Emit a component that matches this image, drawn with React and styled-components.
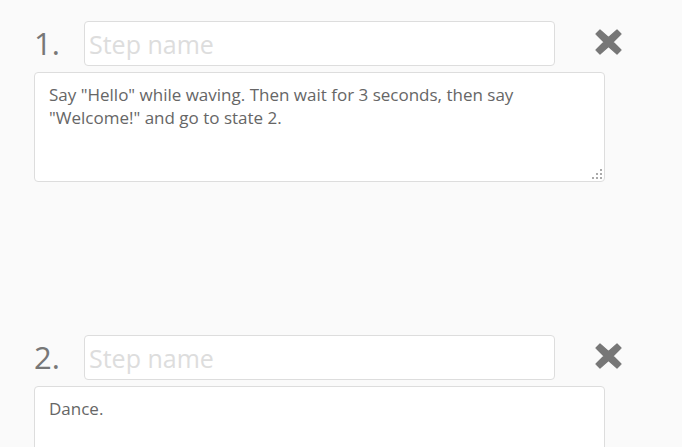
import React from "react"
import styled, { createGlobalStyle } from "styled-components"

const GlobalStyle = createGlobalStyle`
  html, body {
    margin: 0;
    padding: 0;
    background-color: #fafafa;
    font-family: "Open Sans", "Liberation Sans", sans-serif;
  }
  * {
    box-sizing: border-box;
  }
`

const StepList = styled.div`
  display: flex;
  flex-direction: column;
  padding: 21px 0 0 34px;
`

const Step = styled.section`
  display: flex;
  flex-direction: column;
  gap: 6px;
  height: 314px;
`

const StepHeader = styled.div`
  display: flex;
  align-items: center;
`

const StepNumber = styled.span`
  width: 50px;
  font-size: 31px;
  line-height: 45px;
  color: #777;
`

const NameInput = styled.input`
  width: 471px;
  height: 45px;
  padding: 0 4px;
  border: 1px solid #ddd;
  border-radius: 4px;
  background: #fff;
  font-family: inherit;
  font-size: 25px;
  color: #555;
  outline: none;

  &::placeholder {
    color: #ddd;
  }
`

const RemoveButton = styled.button`
  display: flex;
  align-items: center;
  justify-content: center;
  margin-left: 40px;
  margin-top: -4px;
  padding: 0;
  width: 27px;
  height: 27px;
  border: none;
  background: none;
  cursor: pointer;
`

const DescriptionBox = styled.div`
  position: relative;
  width: 571px;
  height: 110px;

  /* dotted resize grip */
  &::after {
    content: "";
    position: absolute;
    right: 3px;
    bottom: 3px;
    width: 2px;
    height: 2px;
    background: #aaa;
    box-shadow:
      -4px 0 0 #aaa,
      -8px 0 0 #aaa,
      0 -4px 0 #aaa,
      -4px -4px 0 #aaa,
      0 -8px 0 #aaa;
    pointer-events: none;
  }
`

const Description = styled.textarea`
  display: block;
  width: 100%;
  height: 100%;
  padding: 10px 14px;
  border: 1px solid #ddd;
  border-radius: 4px;
  background: #fff;
  font-family: inherit;
  font-size: 17px;
  line-height: 23px;
  color: #666;
  resize: none;
  outline: none;
`

function CrossIcon() {
  return (
    <svg width="27" height="26" viewBox="0 0 27 26">
      <path
        d="M5 1 L13.5 8.5 L22 1 L26 5 L18 13 L26 21 L22 25 L13.5 17.5 L5 25 L1 21 L9 13 L1 5 Z"
        fill="#777"
        stroke="#777"
        strokeWidth="1.2"
        strokeLinejoin="round"
      />
    </svg>
  )
}

const steps = [
  { id: 1, text: 'Say "Hello" while waving. Then wait for 3 seconds, then say "Welcome!" and go to state 2.' },
  { id: 2, text: "Dance." },
]

export default function App() {
  return (
    <>
      <GlobalStyle />
      <StepList>
        {steps.map((step, i) => (
          <Step key={step.id}>
            <StepHeader>
              <StepNumber>{i + 1}.</StepNumber>
              <NameInput placeholder="Step name" />
              <RemoveButton aria-label="Remove step">
                <CrossIcon />
              </RemoveButton>
            </StepHeader>
            <DescriptionBox>
              <Description defaultValue={step.text} />
            </DescriptionBox>
          </Step>
        ))}
      </StepList>
    </>
  )
}
